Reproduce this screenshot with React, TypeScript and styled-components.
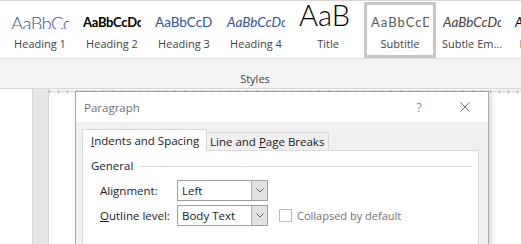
import styled, { createGlobalStyle, css } from 'styled-components';

const GlobalStyle = createGlobalStyle`
  html, body {
    margin: 0;
    padding: 0;
    background: #ffffff;
  }
  body {
    font-family: 'Open Sans', 'Noto Sans', sans-serif;
    overflow: hidden;
  }
`;

type PreviewKind = 'h1' | 'h2' | 'h3' | 'h4' | 'title' | 'subtitle' | 'subtle' | 'emphasis';

const previewStyles: Record<PreviewKind, ReturnType<typeof css>> = {
  h1: css`
    font-size: 18.5px;
    font-weight: 300;
    color: #2f5496;
    letter-spacing: -0.6px;
    margin-bottom: -3px;
  `,
  h2: css`
    font-size: 13px;
    font-weight: 700;
    color: #000000;
    letter-spacing: -0.3px;
  `,
  h3: css`
    font-size: 13.5px;
    color: #2f5496;
  `,
  h4: css`
    font-size: 13.5px;
    font-style: italic;
    color: #2f5496;
  `,
  title: css`
    font-size: 29px;
    font-weight: 300;
    color: #000000;
  `,
  subtitle: css`
    font-size: 13px;
    color: #5a5a5a;
    letter-spacing: 1px;
  `,
  subtle: css`
    font-size: 13.5px;
    font-style: italic;
    color: #404040;
  `,
  emphasis: css`
    font-size: 13px;
    font-style: italic;
    color: #000000;
  `,
};

const STYLES: { label: string; preview: string; kind: PreviewKind; selected?: boolean }[] = [
  { label: 'Heading 1', preview: 'AaBbCcDc', kind: 'h1' },
  { label: 'Heading 2', preview: 'AaBbCcDc', kind: 'h2' },
  { label: 'Heading 3', preview: 'AaBbCcD', kind: 'h3' },
  { label: 'Heading 4', preview: 'AaBbCcDc', kind: 'h4' },
  { label: 'Title', preview: 'AaB', kind: 'title' },
  { label: 'Subtitle', preview: 'AaBbCcD', kind: 'subtitle', selected: true },
  { label: 'Subtle Em...', preview: 'AaBbCcDc', kind: 'subtle' },
  { label: 'Emphasis', preview: 'AaBbCcDc', kind: 'emphasis' },
];

export default function App() {
  return (
    <>
      <GlobalStyle />
      <Page>
        <Ribbon>
          <Gallery>
            {STYLES.map((s) => (
              <StyleItem key={s.label} $selected={!!s.selected}>
                <Preview>
                  <PreviewText $kind={s.kind}>{s.preview}</PreviewText>
                </Preview>
                <StyleLabel>{s.label}</StyleLabel>
              </StyleItem>
            ))}
          </Gallery>
          <GroupLabel>Styles</GroupLabel>
        </Ribbon>

        <Workspace>
          <LeftGap />
          <VRuler />
          <DocArea>
            <HRuler />
          </DocArea>

          <Dialog>
            <TitleBar>
              <DialogTitle>Paragraph</DialogTitle>
              <TitleButton>?</TitleButton>
              <TitleButton>
                <svg width="10" height="10" viewBox="0 0 10 10">
                  <path d="M0.5 0.5 L9.5 9.5 M9.5 0.5 L0.5 9.5" stroke="#707070" strokeWidth="1" fill="none" />
                </svg>
              </TitleButton>
            </TitleBar>

            <DialogBody>
              <Tabs>
                <Tab $active>
                  <u>I</u>ndents and Spacing
                </Tab>
                <Tab>
                  Line and <u>P</u>age Breaks
                </Tab>
              </Tabs>

              <Panel>
                <GroupHeader>
                  <span>General</span>
                  <Rule />
                </GroupHeader>

                <FieldRow>
                  <FieldLabel>
                    Ali<u>g</u>nment:
                  </FieldLabel>
                  <Select>
                    <SelectValue>Left</SelectValue>
                    <SelectButton>
                      <Chevron />
                    </SelectButton>
                  </Select>
                </FieldRow>

                <FieldRow>
                  <FieldLabel>
                    <u>O</u>utline level:
                  </FieldLabel>
                  <Select>
                    <SelectValue>Body Text</SelectValue>
                    <SelectButton>
                      <Chevron />
                    </SelectButton>
                  </Select>
                  <CheckWrap>
                    <CheckBox />
                    <DisabledText>Collapsed by default</DisabledText>
                  </CheckWrap>
                </FieldRow>
              </Panel>
            </DialogBody>
          </Dialog>
        </Workspace>
      </Page>
    </>
  );
}

const Chevron = () => (
  <svg width="8" height="5" viewBox="0 0 8 5">
    <path d="M0.5 0.5 L4 4 L7.5 0.5" stroke="#606060" strokeWidth="1" fill="none" />
  </svg>
);

const Page = styled.div`
  width: 521px;
  height: 244px;
  display: flex;
  flex-direction: column;
  overflow: hidden;
`;

const Ribbon = styled.div`
  background: #f3f3f3;
  border-top: 1px solid #d6d6d6;
  border-bottom: 1px solid #d8d8d8;
  flex-shrink: 0;
`;

const Gallery = styled.div`
  height: 58px;
  box-sizing: border-box;
  padding: 1px 0 0 4px;
  background: #ffffff;
  border-bottom: 1px solid #e1e1e1;
  display: flex;
  overflow: hidden;
`;

const StyleItem = styled.div<{ $selected: boolean }>`
  flex: 0 0 72px;
  width: 72px;
  min-width: 0;
  height: 56px;
  box-sizing: border-box;
  border: 3px solid ${({ $selected }) => ($selected ? '#c6c6c6' : 'transparent')};
  display: flex;
  flex-direction: column;
  overflow: hidden;
`;

const Preview = styled.div`
  height: 24px;
  margin: 0 4px;
  display: flex;
  align-items: flex-end;
  overflow: hidden;
  white-space: nowrap;
  font-family: Lato, 'Open Sans', sans-serif;
`;

const PreviewText = styled.span<{ $kind: PreviewKind }>`
  line-height: 1;
  ${({ $kind }) => previewStyles[$kind]}
`;

const StyleLabel = styled.div`
  margin-top: 7px;
  font-size: 11px;
  line-height: 16px;
  color: #444444;
  text-align: center;
  white-space: nowrap;
`;

const GroupLabel = styled.div`
  height: 29px;
  box-sizing: border-box;
  padding: 12px 11px 0 0;
  font-size: 11px;
  line-height: 16px;
  color: #444444;
  text-align: center;
`;

const Workspace = styled.div`
  position: relative;
  flex: 1;
  display: flex;
  background: #ffffff;
`;

const LeftGap = styled.div`
  width: 32px;
`;

const VRuler = styled.div`
  width: 17px;
  box-sizing: border-box;
  background: #e6e6e6;
  border-left: 1px solid #d6d6d6;
  border-right: 1px solid #d6d6d6;
`;

const DocArea = styled.div`
  flex: 1;
  display: flex;
  flex-direction: column;
`;

const HRuler = styled.div`
  height: 3px;
  margin-top: 1px;
  background: repeating-linear-gradient(
    90deg,
    #b0b0b0 0 1px,
    #e8e8e8 1px 9px
  );
`;

const Dialog = styled.div`
  position: absolute;
  left: 75px;
  top: 2px;
  width: 414px;
  height: 220px;
  box-sizing: border-box;
  border: 1px solid #a8a8a8;
  background: #f0f0f0;
  box-shadow: 2px 2px 6px rgba(0, 0, 0, 0.18);
  display: flex;
  flex-direction: column;
`;

const TitleBar = styled.div`
  height: 30px;
  background: #ffffff;
  display: flex;
  align-items: center;
`;

const DialogTitle = styled.div`
  flex: 1;
  padding-left: 8px;
  font-size: 11.5px;
  color: #707070;
`;

const TitleButton = styled.div`
  width: 46px;
  height: 30px;
  display: flex;
  align-items: center;
  justify-content: center;
  font-size: 12px;
  color: #8a8a8a;
`;

const DialogBody = styled.div`
  flex: 1;
  padding: 7px 9px 0 6px;
  display: flex;
  flex-direction: column;
`;

const Tabs = styled.div`
  display: flex;
  align-items: flex-end;
  margin-bottom: -1px;
  position: relative;
  z-index: 1;
`;

const Tab = styled.div<{ $active?: boolean }>`
  box-sizing: border-box;
  border: 1px solid #d9d9d9;
  font-size: 11.5px;
  color: #1a1a1a;
  white-space: nowrap;
  ${({ $active }) =>
    $active
      ? css`
          width: 125px;
          height: 22px;
          padding: 2px 0 0 8px;
          background: #ffffff;
          border-bottom-color: #ffffff;
          line-height: 17px;
        `
      : css`
          width: 122px;
          height: 19px;
          padding: 1px 0 0 3px;
          background: #f0f0f0;
          border-left: none;
          line-height: 16px;
        `}
`;

const Panel = styled.div`
  flex: 1;
  background: #ffffff;
  border: 1px solid #d9d9d9;
  padding: 7px 6px 0 8px;
  display: flex;
  flex-direction: column;
`;

const GroupHeader = styled.div`
  display: flex;
  align-items: center;
  gap: 7px;
  font-size: 11.5px;
  line-height: 16px;
  color: #1a1a1a;
  margin-bottom: 6px;
`;

const Rule = styled.div`
  flex: 1;
  height: 1px;
  background: #dcdcdc;
`;

const FieldRow = styled.div`
  display: flex;
  align-items: center;
  padding-left: 9px;
  margin-bottom: 4px;
`;

const FieldLabel = styled.div`
  width: 77px;
  font-size: 11.5px;
  color: #1a1a1a;
  white-space: nowrap;
`;

const Select = styled.div`
  width: 91px;
  height: 21px;
  box-sizing: border-box;
  border: 1px solid #a0a0a0;
  background: #ffffff;
  display: flex;
`;

const SelectValue = styled.div`
  flex: 1;
  padding-left: 4px;
  font-size: 11.5px;
  line-height: 19px;
  color: #1a1a1a;
`;

const SelectButton = styled.div`
  width: 15px;
  background: #e1e1e1;
  border-left: 1px solid #adadad;
  display: flex;
  align-items: center;
  justify-content: center;
`;

const CheckWrap = styled.div`
  display: flex;
  align-items: center;
  gap: 5px;
  margin-left: 11px;
`;

const CheckBox = styled.div`
  width: 13px;
  height: 13px;
  box-sizing: border-box;
  border: 1px solid #bcbcbc;
  background: #ffffff;
`;

const DisabledText = styled.span`
  font-size: 11px;
  color: #737373;
`;
